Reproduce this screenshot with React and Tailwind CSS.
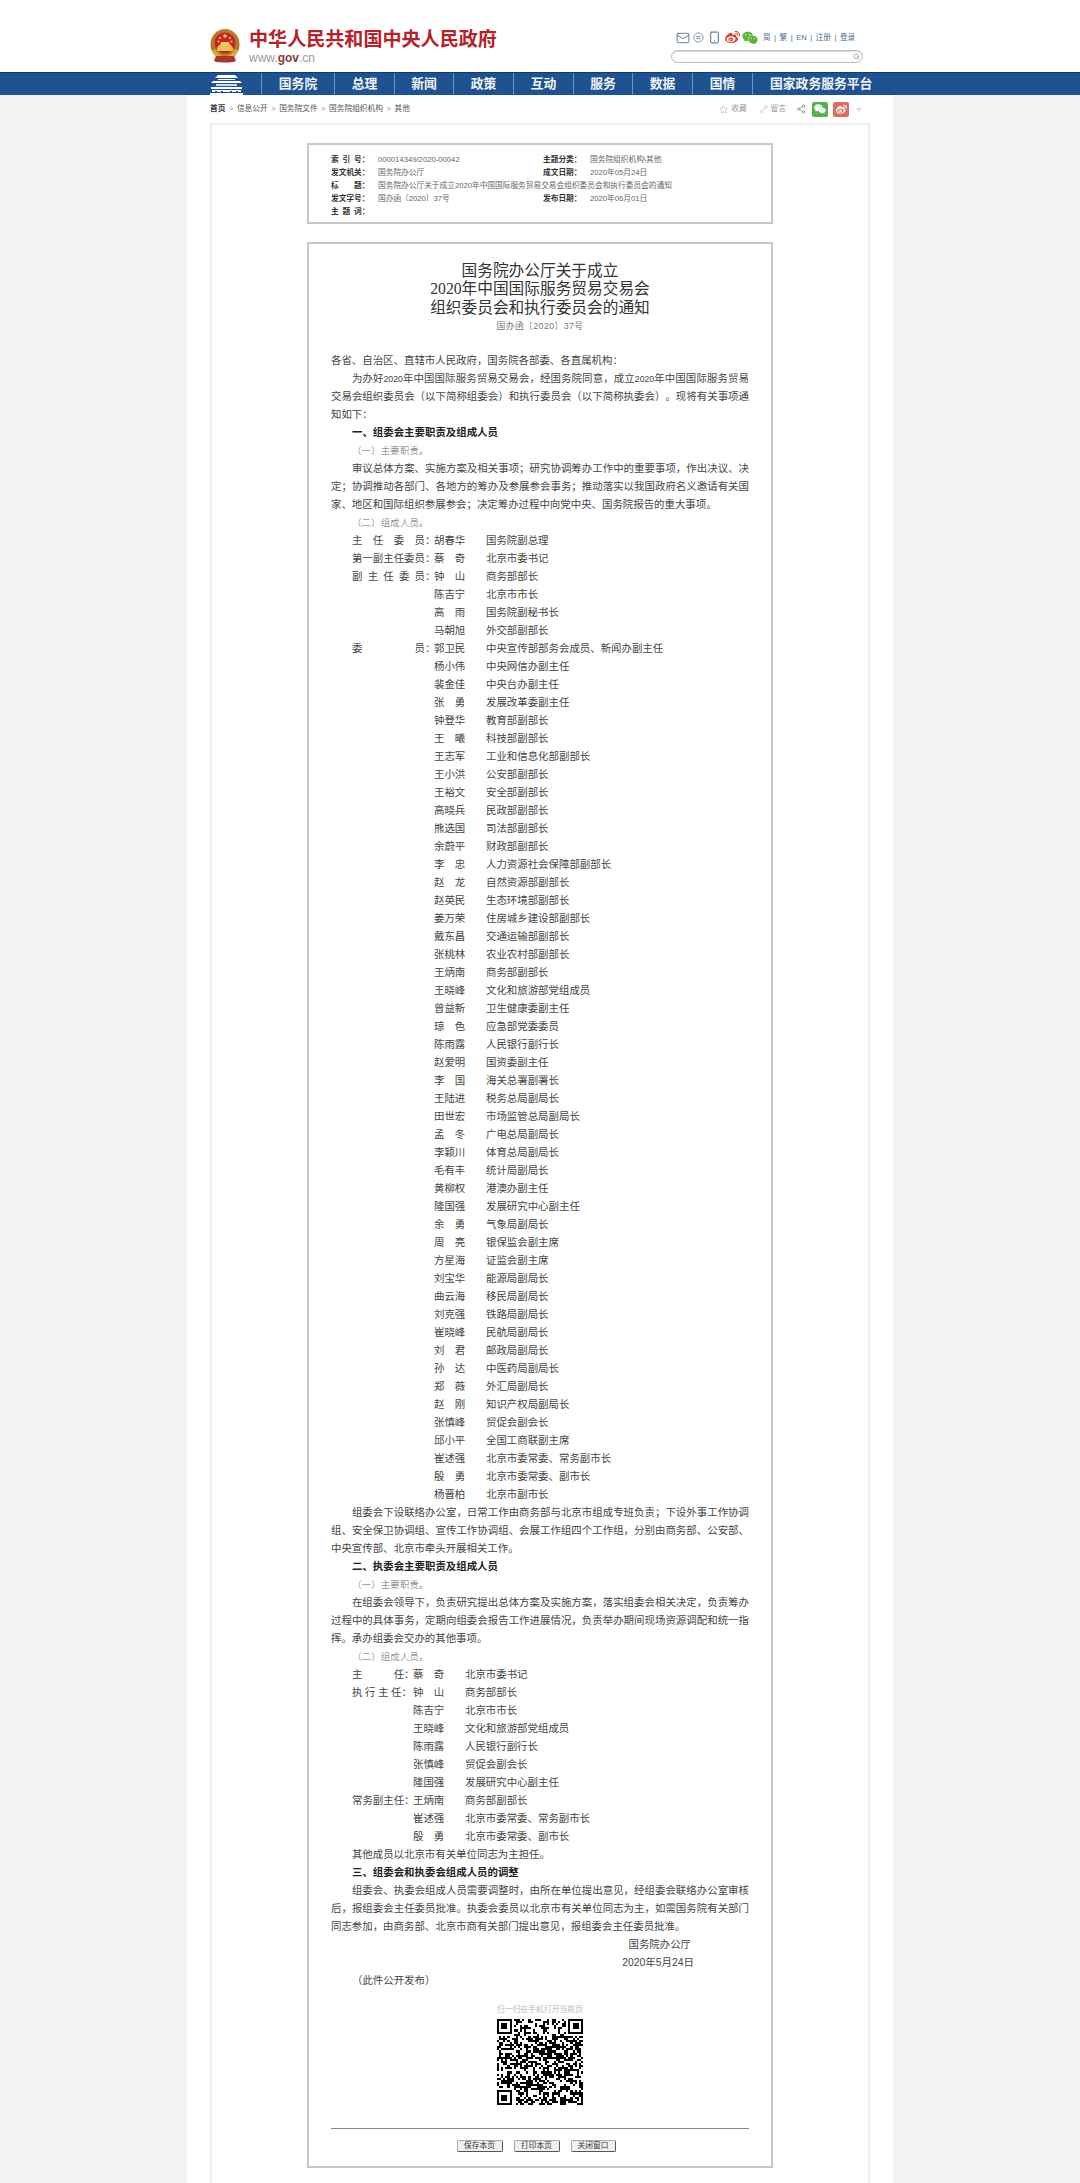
import { Mail, Smartphone, Star, Pencil, Share2, Plus, Search } from 'lucide-react';
import { FaWeibo, FaWeixin } from 'react-icons/fa';

const navItems = [
  { label: '国务院', width: 'w-[73px] justify-center' },
  { label: '总理', width: 'w-[60px] justify-center' },
  { label: '新闻', width: 'w-[59px] justify-center' },
  { label: '政策', width: 'w-[60px] justify-center' },
  { label: '互动', width: 'w-[60px] justify-center' },
  { label: '服务', width: 'w-[59px] justify-center' },
  { label: '数据', width: 'w-[60px] justify-center' },
  { label: '国情', width: 'w-[60px] justify-center' },
  { label: '国家政务服务平台', width: 'w-[118px] pl-[17px] whitespace-nowrap' },
];

const crumbs = ['信息公开', '国务院文件', '国务院组织机构', '其他'];

const organizers = [
  ['主　任　委　员：', '胡春华', '国务院副总理'],
  ['第一副主任委员：', '蔡　奇', '北京市委书记'],
  ['副\u2002主\u2002任\u2002委\u2002员：', '钟　山', '商务部部长'],
  ['', '陈吉宁', '北京市市长'],
  ['', '高　雨', '国务院副秘书长'],
  ['', '马朝旭', '外交部副部长'],
  ['委　　　　　员：', '郭卫民', '中央宣传部部务会成员、新闻办副主任'],
  ['', '杨小伟', '中央网信办副主任'],
  ['', '裴金佳', '中央台办副主任'],
  ['', '张　勇', '发展改革委副主任'],
  ['', '钟登华', '教育部副部长'],
  ['', '王　曦', '科技部副部长'],
  ['', '王志军', '工业和信息化部副部长'],
  ['', '王小洪', '公安部副部长'],
  ['', '王裕文', '安全部副部长'],
  ['', '高晓兵', '民政部副部长'],
  ['', '熊选国', '司法部副部长'],
  ['', '余蔚平', '财政部副部长'],
  ['', '李　忠', '人力资源社会保障部副部长'],
  ['', '赵　龙', '自然资源部副部长'],
  ['', '赵英民', '生态环境部副部长'],
  ['', '姜万荣', '住房城乡建设部副部长'],
  ['', '戴东昌', '交通运输部副部长'],
  ['', '张桃林', '农业农村部副部长'],
  ['', '王炳南', '商务部副部长'],
  ['', '王晓峰', '文化和旅游部党组成员'],
  ['', '曾益新', '卫生健康委副主任'],
  ['', '琼　色', '应急部党委委员'],
  ['', '陈雨露', '人民银行副行长'],
  ['', '赵爱明', '国资委副主任'],
  ['', '李　国', '海关总署副署长'],
  ['', '王陆进', '税务总局副局长'],
  ['', '田世宏', '市场监管总局副局长'],
  ['', '孟　冬', '广电总局副局长'],
  ['', '李颖川', '体育总局副局长'],
  ['', '毛有丰', '统计局副局长'],
  ['', '黄柳权', '港澳办副主任'],
  ['', '隆国强', '发展研究中心副主任'],
  ['', '余　勇', '气象局副局长'],
  ['', '周　亮', '银保监会副主席'],
  ['', '方星海', '证监会副主席'],
  ['', '刘宝华', '能源局副局长'],
  ['', '曲云海', '移民局副局长'],
  ['', '刘克强', '铁路局副局长'],
  ['', '崔晓峰', '民航局副局长'],
  ['', '刘　君', '邮政局副局长'],
  ['', '孙　达', '中医药局副局长'],
  ['', '郑　薇', '外汇局副局长'],
  ['', '赵　刚', '知识产权局副局长'],
  ['', '张慎峰', '贸促会副会长'],
  ['', '邱小平', '全国工商联副主席'],
  ['', '崔述强', '北京市委常委、常务副市长'],
  ['', '殷　勇', '北京市委常委、副市长'],
  ['', '杨晋柏', '北京市副市长'],
];

const executives = [
  ['主　　　任：', '蔡　奇', '北京市委书记'],
  ['执\u2005行\u2005主\u2005任：', '钟　山', '商务部部长'],
  ['', '陈吉宁', '北京市市长'],
  ['', '王晓峰', '文化和旅游部党组成员'],
  ['', '陈雨露', '人民银行副行长'],
  ['', '张慎峰', '贸促会副会长'],
  ['', '隆国强', '发展研究中心副主任'],
  ['常务副主任：', '王炳南', '商务部副部长'],
  ['', '崔述强', '北京市委常委、常务副市长'],
  ['', '殷　勇', '北京市委常委、副市长'],
];

// pseudo random modules, the three finder squares are drawn over them
function qrPath(size) {
  let seed = 20200524;
  let d = '';
  const inFinder = (x, y) =>
    (x < 8 && y < 8) || (x >= size - 8 && y < 8) || (x < 8 && y >= size - 8);
  for (let y = 0; y < size; y++) {
    for (let x = 0; x < size; x++) {
      seed = (seed * 1103515245 + 12345) & 0x7fffffff;
      if (!inFinder(x, y) && (seed >> 16) % 100 < 52) d += `M${x} ${y}h1v1h-1z`;
    }
  }
  return d;
}

function Finder({ x, y }) {
  return (
    <g>
      <path d={`M${x} ${y}h7v7h-7zM${x + 1} ${y + 1}v5h5v-5z`} fillRule="evenodd" />
      <rect x={x + 2} y={y + 2} width="3" height="3" />
    </g>
  );
}

function Emblem() {
  return (
    <svg width="30" height="34" viewBox="0 0 30 34">
      <ellipse cx="15" cy="15.5" rx="14.5" ry="15.5" fill="#b5792a" />
      <circle cx="15" cy="14" r="10.5" fill="#c8242b" />
      <path d="M2 22c3 6 7 9 13 9s10-3 13-9l-3-2c-2 4-5 7-10 7s-8-3-10-7z" fill="#e0a83c" />
      <path d="M6 27h18l2 5c-3 2-19 2-22 0z" fill="#a8342c" />
      <path d="M9 16h12l2 3v3H7v-3z" fill="#eec04f" />
      <path d="M11 13h8l1 3H10z" fill="#f3cf63" />
      <circle cx="15" cy="7" r="1.7" fill="#f4d058" />
      <circle cx="10" cy="9" r="1" fill="#f4d058" />
      <circle cx="20" cy="9" r="1" fill="#f4d058" />
      <circle cx="8.5" cy="12.5" r="1" fill="#f4d058" />
      <circle cx="21.5" cy="12.5" r="1" fill="#f4d058" />
    </svg>
  );
}

function GateIcon() {
  return (
    <svg width="33" height="21" viewBox="0 0 33 21" fill="#fff">
      <path d="M8 1h17l3 3H5z" />
      <rect x="8" y="5" width="17" height="1" />
      <path d="M3 7h27l2 2H1z" />
      <rect x="6" y="10" width="21" height="2" fillOpacity="0.8" />
      <rect x="1" y="13" width="31" height="2" />
      <path d="M2 16h29v2h-3v-1h-2v1h-4v-1h-2v1h-7v-1h-2v1H7v-1H5v1H2z" />
      <rect x="0" y="19" width="33" height="2" />
    </svg>
  );
}

function Member({ row, labelWidth }) {
  return (
    <div className="flex pl-[21px] whitespace-pre">
      <span className={labelWidth}>{row[0]}</span>
      <span className="w-[52px]">{row[1]}</span>
      <span>{row[2]}</span>
    </div>
  );
}

function Para({ children }) {
  return <p className="indent-[20.9px] text-justify">{children}</p>;
}

function Heading({ children }) {
  return <p className="pl-[21px] font-bold text-[#222]">{children}</p>;
}

function SubHeading({ children }) {
  return <p className="pl-[21px] text-[9.4px] font-light text-[#666] tracking-[0.2px]">{children}</p>;
}

function MetaLabel({ children }) {
  return <span className="w-[47px] shrink-0 font-bold text-[#333] whitespace-pre">{children}</span>;
}

function PrintButton({ children, width }) {
  return (
    <button className={`${width} h-[12px] flex items-center justify-center rounded-[2px] border border-[#aaa] border-r-[#555] border-b-[#555] bg-[#eef0f4] text-[7.7px] text-[#333]`}>
      {children}
    </button>
  );
}

export default function App() {
  const qrSize = 41;

  return (
    <div className="h-[2183px] overflow-hidden bg-white flex flex-col font-['Liberation_Sans','Noto_Sans_CJK_SC',sans-serif] [text-spacing-trim:space-all]">
      {/* Header */}
      <header className="h-[72px] shrink-0">
        <div className="w-[660px] mx-auto flex justify-between">
          <div className="flex items-start pt-[29px] gap-[9px]">
            <Emblem />
            <div className="-mt-[1px]">
              <div className="text-[19.07px] leading-[24px] font-bold text-[#b5232a]">中华人民共和国中央人民政府</div>
              <div className="text-[12px] leading-[13px] text-[#999]">
                www.<span className="font-bold text-[#8b3a34]">gov</span>.cn
              </div>
            </div>
          </div>
          <div className="w-[192px] mr-[7px] pt-[31px]">
            <div className="flex items-center h-[13px] pl-[5px] text-[#3f6587]">
              <Mail size={14} strokeWidth={1.4} />
              <svg className="ml-[3px]" width="11" height="11" viewBox="0 0 11 11" fill="none" stroke="#7d93a6">
                <circle cx="5.5" cy="5.5" r="4.6" />
                <path d="M3.5 4.5h4M3.5 6.5h4" />
              </svg>
              <Smartphone className="ml-[4px]" size={13} strokeWidth={1.8} />
              <FaWeibo className="ml-[4px] text-[#d8432f]" size={15} />
              <FaWeixin className="ml-[2px] text-[#5fb336]" size={16} />
              <div className="ml-[5px] flex items-center gap-[3.5px] text-[7.6px] text-[#4d6f90]">
                <span>简</span>
                <span>|</span>
                <span>繁</span>
                <span>|</span>
                <span>EN</span>
                <span>|</span>
                <span>注册</span>
                <span>|</span>
                <span>登录</span>
              </div>
            </div>
            <div className="mt-[6px] h-[13px] rounded-full border border-[#bbb] shadow-[inset_0_1px_1px_#ddd] flex items-center justify-end pr-[2px]">
              <Search size={7} strokeWidth={2} className="text-[#777]" />
            </div>
          </div>
        </div>
      </header>

      {/* Nav */}
      <nav className="h-[23px] shrink-0 bg-[#1f5291] border-t border-[#123a6e]">
        <div className="w-[660px] h-full mx-auto flex">
          <div className="w-[51px] flex items-center">
            <GateIcon />
          </div>
          {navItems.map((item) => (
            <a key={item.label} className={`${item.width} flex items-center border-l border-[#6f93bd] text-[12.8px] font-bold text-[#f0f4f8]`}>
              {item.label}
            </a>
          ))}
        </div>
      </nav>

      {/* Page */}
      <main className="flex-1 bg-[#f2f2f2] flex justify-center min-h-0">
        <div className="w-[706px] bg-white px-[23px] flex flex-col">
          <div className="h-[28px] shrink-0 flex items-center justify-between text-[7.7px] text-[#555]">
            <div className="flex items-center gap-[3.5px]">
              <span className="font-bold text-[#333]">首页</span>
              {crumbs.map((c) => (
                <span key={c} className="flex items-center gap-[3.5px]">
                  <span className="text-[#888]">&gt;</span>
                  <span>{c}</span>
                </span>
              ))}
            </div>
            <div className="flex items-center text-[#999] mr-[7px]">
              <Star size={9} strokeWidth={1.3} />
              <span className="ml-[3px]">收藏</span>
              <Pencil className="ml-[13px]" size={8} strokeWidth={1.3} />
              <span className="ml-[3px]">留言</span>
              <Share2 className="ml-[10px] text-[#666]" size={10} strokeWidth={1.3} />
              <span className="ml-[6px] w-[16px] h-[15px] rounded-[2px] bg-[#56b04f] flex items-center justify-center text-white">
                <FaWeixin size={12} />
              </span>
              <span className="ml-[5px] w-[16px] h-[15px] rounded-[2px] bg-[#dd6f60] flex items-center justify-center text-white">
                <FaWeibo size={11} />
              </span>
              <Plus className="ml-[6px]" size={8} strokeWidth={1.3} />
            </div>
          </div>

          <div className="flex-1 border-2 border-b-0 border-[#eeeeee] pt-[18px]">
            {/* Meta box */}
            <section className="w-[466px] h-[81px] mx-auto border-2 border-[#c8c8c8] pl-[22px] pt-[8px] text-[7.7px] leading-[13px] text-[#666]">
              <div className="flex">
                <MetaLabel>索{'\u2002'}引{'\u2002'}号：</MetaLabel>
                <span className="w-[165px]">000014349/2020-00042</span>
                <MetaLabel>主题分类：</MetaLabel>
                <span>国务院组织机构\其他</span>
              </div>
              <div className="flex">
                <MetaLabel>发文机关：</MetaLabel>
                <span className="w-[165px]">国务院办公厅</span>
                <MetaLabel>成文日期：</MetaLabel>
                <span>2020年05月24日</span>
              </div>
              <div className="flex">
                <MetaLabel>标　　题：</MetaLabel>
                <span>国务院办公厅关于成立2020年中国国际服务贸易交易会组织委员会和执行委员会的通知</span>
              </div>
              <div className="flex">
                <MetaLabel>发文字号：</MetaLabel>
                <span className="w-[165px]">国办函〔2020〕37号</span>
                <MetaLabel>发布日期：</MetaLabel>
                <span>2020年06月01日</span>
              </div>
              <div className="flex">
                <MetaLabel>主{'\u2002'}题{'\u2002'}词：</MetaLabel>
              </div>
            </section>

            {/* Document */}
            <section className="w-[466px] mt-[18px] mx-auto border-2 border-[#c8c8c8] px-[22px] pt-[18px] pb-[14px]">
              <h1 className="text-center text-[15.7px] leading-[18.4px] text-[#333] font-normal font-['Liberation_Serif','Noto_Sans_CJK_SC',sans-serif]">
                国务院办公厅关于成立
                <br />
                2020年中国国际服务贸易交易会
                <br />
                组织委员会和执行委员会的通知
              </h1>
              <p className="mt-[0px] mb-[17px] text-center text-[8.8px] leading-[18px] tracking-[0.4px] text-[#777]">国办函〔2020〕37号</p>

              <div className="text-[10.43px] leading-[18px] text-[#444]">
                <p>各省、自治区、直辖市人民政府，国务院各部委、各直属机构：</p>
                <Para>为办好<span className="text-[8.7px]">2020</span>年中国国际服务贸易交易会，经国务院同意，成立<span className="text-[8.7px]">2020</span>年中国国际服务贸易交易会组织委员会（以下简称组委会）和执行委员会（以下简称执委会）。现将有关事项通知如下：</Para>
                <Heading>一、组委会主要职责及组成人员</Heading>
                <SubHeading>（一）主要职责。</SubHeading>
                <Para>审议总体方案、实施方案及相关事项；研究协调筹办工作中的重要事项，作出决议、决定；协调推动各部门、各地方的筹办及参展参会事务；推动落实以我国政府名义邀请有关国家、地区和国际组织参展参会；决定筹办过程中向党中央、国务院报告的重大事项。</Para>
                <SubHeading>（二）组成人员。</SubHeading>
                {organizers.map((row) => (
                  <Member key={row[1] + row[2]} row={row} labelWidth="w-[82px]" />
                ))}
                <Para>组委会下设联络办公室，日常工作由商务部与北京市组成专班负责；下设外事工作协调组、安全保卫协调组、宣传工作协调组、会展工作组四个工作组，分别由商务部、公安部、中央宣传部、北京市牵头开展相关工作。</Para>
                <Heading>二、执委会主要职责及组成人员</Heading>
                <SubHeading>（一）主要职责。</SubHeading>
                <Para>在组委会领导下，负责研究提出总体方案及实施方案，落实组委会相关决定，负责筹办过程中的具体事务，定期向组委会报告工作进展情况，负责举办期间现场资源调配和统一指挥。承办组委会交办的其他事项。</Para>
                <SubHeading>（二）组成人员。</SubHeading>
                {executives.map((row) => (
                  <Member key={row[1] + row[2]} row={row} labelWidth="w-[61px]" />
                ))}
                <Para>其他成员以北京市有关单位同志为主担任。</Para>
                <Heading>三、组委会和执委会组成人员的调整</Heading>
                <Para>组委会、执委会组成人员需要调整时，由所在单位提出意见，经组委会联络办公室审核后，报组委会主任委员批准。执委会委员以北京市有关单位同志为主，如需国务院有关部门同志参加，由商务部、北京市商有关部门提出意见，报组委会主任委员批准。</Para>
                <p className="text-right pr-[58px]">国务院办公厅</p>
                <p className="text-right pr-[55px]">2020年5月24日</p>
                <p className="pl-[21px]">（此件公开发布）</p>
              </div>

              <div className="mt-[14px] flex flex-col items-center">
                <div className="text-[7.8px] leading-[12px] text-[#bbb] whitespace-nowrap">扫一扫在手机打开当前页</div>
                <svg className="mt-[3px]" width="86" height="86" viewBox="0 0 41 41" shapeRendering="crispEdges" fill="#000">
                  <path d={qrPath(qrSize)} />
                  <Finder x={0} y={0} />
                  <Finder x={34} y={0} />
                  <Finder x={0} y={34} />
                </svg>
              </div>

              <div className="mt-[23px] border-t border-[#888]" />

              <div className="mt-[11px] pr-[8px] flex justify-center gap-[11px]">
                <PrintButton width="w-[46px]">保存本页</PrintButton>
                <PrintButton width="w-[46px]">打印本页</PrintButton>
                <PrintButton width="w-[45px]">关闭窗口</PrintButton>
              </div>
            </section>
          </div>
        </div>
      </main>
    </div>
  );
}
